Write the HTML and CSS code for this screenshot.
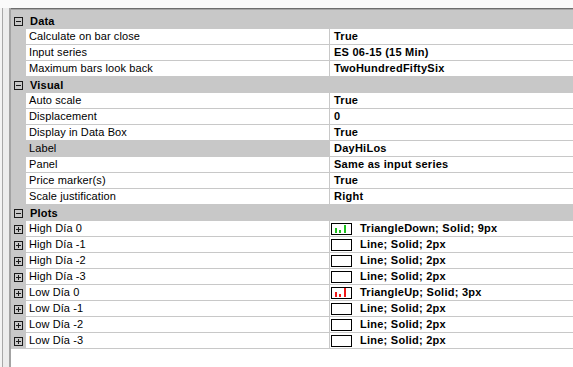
FILE: index.html
```html
<!DOCTYPE html>
<html lang="en">

<head>
    <meta charset="UTF-8">
    <title>Properties</title>
    <link rel="stylesheet" href="styles.css">
</head>

<body>
    <div class="topbar"></div>
    <div class="frame">
        <div class="side"></div>
        <div class="grid">
            <!-- Data -->
            <div class="cat"><span class="gut"><svg class="tog" width="9" height="9"><rect x="0.5" y="0.5" width="8" height="8" fill="none" stroke="#1a1a1a"/><path d="M2 4.5h5" stroke="#1a1a1a"/></svg></span><span class="cat-name">Data</span></div>
            <div class="row"><span class="gut"></span><span class="name">Calculate on bar close</span><span class="val">True</span></div>
            <div class="row"><span class="gut"></span><span class="name">Input series</span><span class="val">ES 06-15 (15 Min)</span></div>
            <div class="row"><span class="gut"></span><span class="name">Maximum bars look back</span><span class="val">TwoHundredFiftySix</span></div>

            <!-- Visual -->
            <div class="cat"><span class="gut"><svg class="tog" width="9" height="9"><rect x="0.5" y="0.5" width="8" height="8" fill="none" stroke="#1a1a1a"/><path d="M2 4.5h5" stroke="#1a1a1a"/></svg></span><span class="cat-name">Visual</span></div>
            <div class="row"><span class="gut"></span><span class="name">Auto scale</span><span class="val">True</span></div>
            <div class="row"><span class="gut"></span><span class="name">Displacement</span><span class="val">0</span></div>
            <div class="row"><span class="gut"></span><span class="name">Display in Data Box</span><span class="val">True</span></div>
            <div class="row selected"><span class="gut"></span><span class="name">Label</span><span class="val">DayHiLos</span></div>
            <div class="row"><span class="gut"></span><span class="name">Panel</span><span class="val">Same as input series</span></div>
            <div class="row"><span class="gut"></span><span class="name">Price marker(s)</span><span class="val">True</span></div>
            <div class="row"><span class="gut"></span><span class="name">Scale justification</span><span class="val">Right</span></div>

            <!-- Plots -->
            <div class="cat"><span class="gut"><svg class="tog" width="9" height="9"><rect x="0.5" y="0.5" width="8" height="8" fill="none" stroke="#1a1a1a"/><path d="M2 4.5h5" stroke="#1a1a1a"/></svg></span><span class="cat-name">Plots</span></div>
            <div class="row"><span class="gut"><svg class="tog" width="9" height="9"><rect x="0.5" y="0.5" width="8" height="8" fill="none" stroke="#1a1a1a"/><path d="M2 4.5h5M4.5 2v5" stroke="#1a1a1a"/></svg></span><span class="name">High Día 0</span>
                <span class="val"><svg class="swatch" width="21" height="12"><rect x="0.5" y="0.5" width="20" height="11" fill="#fff" stroke="#000"/><rect x="4" y="5" width="2" height="5" fill="#1ec31e"/><rect x="8" y="7" width="2" height="3" fill="#1ec31e"/><rect x="13" y="2" width="2" height="8" fill="#1ec31e"/></svg>TriangleDown; Solid; 9px</span></div>
            <div class="row"><span class="gut"><svg class="tog" width="9" height="9"><rect x="0.5" y="0.5" width="8" height="8" fill="none" stroke="#1a1a1a"/><path d="M2 4.5h5M4.5 2v5" stroke="#1a1a1a"/></svg></span><span class="name">High Día -1</span>
                <span class="val"><svg class="swatch" width="21" height="12"><rect x="0.5" y="0.5" width="20" height="11" fill="#fff" stroke="#000"/></svg>Line; Solid; 2px</span></div>
            <div class="row"><span class="gut"><svg class="tog" width="9" height="9"><rect x="0.5" y="0.5" width="8" height="8" fill="none" stroke="#1a1a1a"/><path d="M2 4.5h5M4.5 2v5" stroke="#1a1a1a"/></svg></span><span class="name">High Día -2</span>
                <span class="val"><svg class="swatch" width="21" height="12"><rect x="0.5" y="0.5" width="20" height="11" fill="#fff" stroke="#000"/></svg>Line; Solid; 2px</span></div>
            <div class="row"><span class="gut"><svg class="tog" width="9" height="9"><rect x="0.5" y="0.5" width="8" height="8" fill="none" stroke="#1a1a1a"/><path d="M2 4.5h5M4.5 2v5" stroke="#1a1a1a"/></svg></span><span class="name">High Día -3</span>
                <span class="val"><svg class="swatch" width="21" height="12"><rect x="0.5" y="0.5" width="20" height="11" fill="#fff" stroke="#000"/></svg>Line; Solid; 2px</span></div>
            <div class="row"><span class="gut"><svg class="tog" width="9" height="9"><rect x="0.5" y="0.5" width="8" height="8" fill="none" stroke="#1a1a1a"/><path d="M2 4.5h5M4.5 2v5" stroke="#1a1a1a"/></svg></span><span class="name">Low Día 0</span>
                <span class="val"><svg class="swatch" width="21" height="12"><rect x="0.5" y="0.5" width="20" height="11" fill="#fff" stroke="#000"/><rect x="4" y="5" width="2" height="5" fill="#f01818"/><rect x="8" y="7" width="2" height="3" fill="#f01818"/><rect x="13" y="1" width="2" height="9" fill="#f01818"/></svg>TriangleUp; Solid; 3px</span></div>
            <div class="row"><span class="gut"><svg class="tog" width="9" height="9"><rect x="0.5" y="0.5" width="8" height="8" fill="none" stroke="#1a1a1a"/><path d="M2 4.5h5M4.5 2v5" stroke="#1a1a1a"/></svg></span><span class="name">Low Día -1</span>
                <span class="val"><svg class="swatch" width="21" height="12"><rect x="0.5" y="0.5" width="20" height="11" fill="#fff" stroke="#000"/></svg>Line; Solid; 2px</span></div>
            <div class="row"><span class="gut"><svg class="tog" width="9" height="9"><rect x="0.5" y="0.5" width="8" height="8" fill="none" stroke="#1a1a1a"/><path d="M2 4.5h5M4.5 2v5" stroke="#1a1a1a"/></svg></span><span class="name">Low Día -2</span>
                <span class="val"><svg class="swatch" width="21" height="12"><rect x="0.5" y="0.5" width="20" height="11" fill="#fff" stroke="#000"/></svg>Line; Solid; 2px</span></div>
            <div class="row"><span class="gut"><svg class="tog" width="9" height="9"><rect x="0.5" y="0.5" width="8" height="8" fill="none" stroke="#1a1a1a"/><path d="M2 4.5h5M4.5 2v5" stroke="#1a1a1a"/></svg></span><span class="name">Low Día -3</span>
                <span class="val"><svg class="swatch" width="21" height="12"><rect x="0.5" y="0.5" width="20" height="11" fill="#fff" stroke="#000"/></svg>Line; Solid; 2px</span></div>
        </div>
    </div>
</body>

</html>
```

FILE: styles.css
```css
/* property grid */
body {
    font-family: 'Liberation Sans', Arial, sans-serif;
    font-size: 11px;
    color: #000;
    margin: 0;
    background: #fff;
    height: 367px;
    overflow: hidden;
    display: flex;
    flex-direction: column;
}

.topbar {
    height: 8px;
    background: #fafafa;
}

.frame {
    flex: 1;
    display: flex;
}

/* left strip */
.side {
    width: 9px;
    background: linear-gradient(to right, #f4f4f4 2px, #a8a8a8 2px, #a8a8a8 3px, #ededed 3px);
    border-right: 2px solid #a3a3a3;
}

.grid {
    flex: 1;
    border-top: 1px solid #6e6e6e;
    box-shadow: inset 0 1px 0 #a6a6a6;
    padding-top: 4px;
    background: linear-gradient(#c8c8c8, #c8c8c8) top / 100% 4px no-repeat, #fff;
}

.gut {
    display: flex;
    align-items: center;
    justify-content: flex-end;
    padding-right: 3px;
    background: #c8c8c8;
}

.tog {
    display: block;
}

.cat {
    display: grid;
    grid-template-columns: 15px 1fr;
    height: 16px;
    background: #c8c8c8;
}

.cat-name {
    font-weight: bold;
    line-height: 16px;
    padding-left: 4px;
    letter-spacing: 0.2px;
}

.row {
    display: grid;
    grid-template-columns: 15px 303px 1fr;
    height: 16px;
}

.name,
.val {
    background: #fff;
    border-bottom: 1px solid #c8c8c8;
    line-height: 15px;
    white-space: nowrap;
    overflow: hidden;
}

.name {
    padding-left: 3px;
    letter-spacing: 0.1px;
}

.val {
    border-left: 1px solid #c8c8c8;
    padding-left: 4px;
    font-weight: bold;
    letter-spacing: 0.25px;
    display: flex;
    align-items: center;
}

.row.selected .name {
    background: #c8c8c8;
}

.swatch {
    display: block;
    margin-left: -3px;
    margin-right: 8px;
}
```
